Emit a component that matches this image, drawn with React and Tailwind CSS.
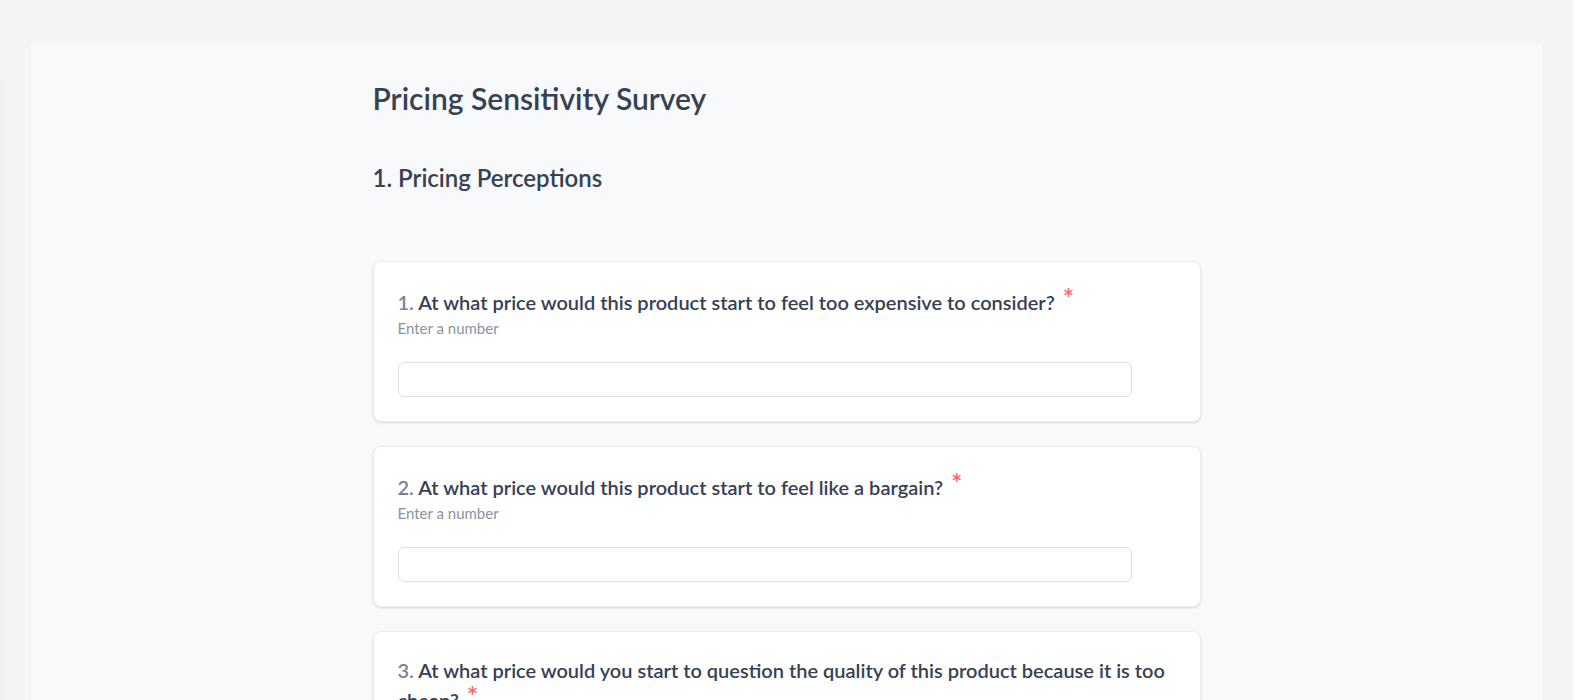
import React from 'react';

const questions = [
  { n: 1, text: 'At what price would this product start to feel too expensive to consider?' },
  { n: 2, text: 'At what price would this product start to feel like a bargain?' },
  { n: 3, text: 'At what price would you start to question the quality of this product because it is too cheap?' },
  { n: 4, text: 'At what price would this product start to feel expensive, but still worth considering?' },
];

const QuestionCard = ({ n, text }) => (
  <div className="rounded-lg border border-[#eceef1] bg-white px-6 pt-6 pb-6 shadow-sm">
    <label className="mb-[2px] block text-xl leading-7 font-semibold text-gray-700">
      <span className="text-[#7b8391]">{n}.</span> {text}
      <span className="ml-2 inline-block -translate-y-0.5 text-[27px] leading-none text-red-400">*</span>
    </label>
    <p className="text-[15px] leading-5 text-[#8b929e]">Enter a number</p>
    <input
      type="text"
      className="mt-6 block h-[35px] w-[734px] rounded-md border border-[#dcdfe4] bg-white px-3 text-sm outline-none"
    />
  </div>
);

export default function App() {
  return (
    <div className="flex min-h-screen bg-[#f3f4f6] font-['Lato',sans-serif]">
      <div className="relative flex-1 pt-[44px] px-[31px]">
        <div className="pointer-events-none absolute left-0 top-[80px] bottom-0 w-[9px] bg-gradient-to-r from-[#eceef1] to-transparent" />
        <div className="bg-[#f8f9fb] pt-9 pb-16">
          <div className="mx-auto max-w-[828px]">
            <h1 className="text-3xl font-semibold text-gray-700">Pricing Sensitivity Survey</h1>
            <h2 className="mt-[46px] text-2xl font-semibold text-gray-700">1. Pricing Perceptions</h2>
            <div className="mt-[67px] flex flex-col gap-6">
              {questions.map((q) => (
                <QuestionCard key={q.n} {...q} />
              ))}
            </div>
          </div>
        </div>
      </div>
      <div className="w-[15px] shrink-0 bg-white" />
    </div>
  );
}
